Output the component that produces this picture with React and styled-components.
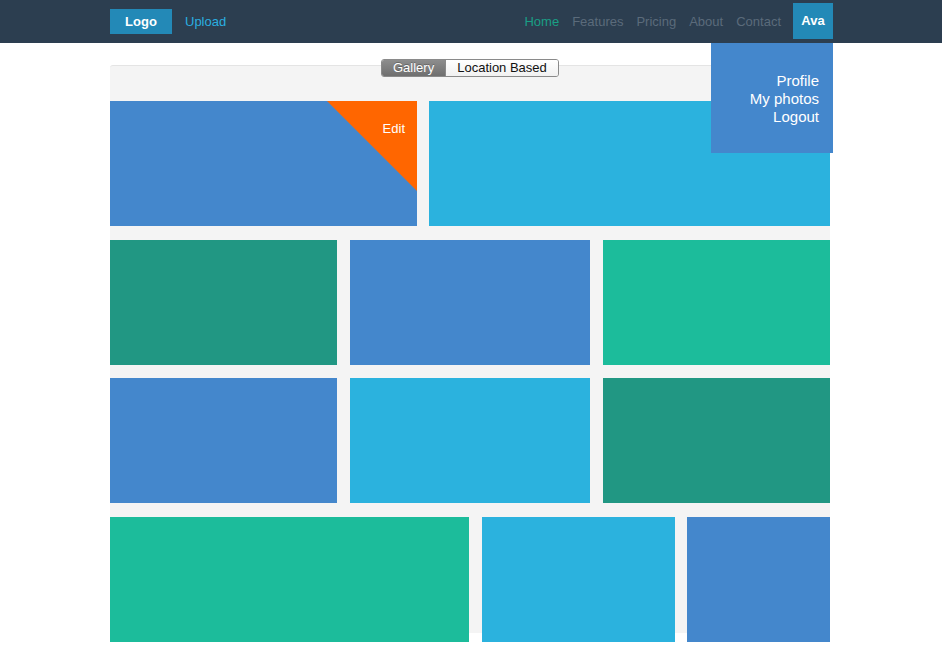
import styled, { createGlobalStyle } from 'styled-components';

const GlobalStyle = createGlobalStyle`
  body {
    margin: 0;
    background: #fff;
    font-family: "Liberation Sans", Arial, sans-serif;
  }
`;

const rows = [
  {
    gap: 12,
    top: 0,
    tiles: [
      { w: 307, c: '#4487cc', edit: true },
      { w: 401, c: '#2bb2de' },
    ],
  },
  {
    gap: 13,
    top: 14,
    tiles: [
      { w: 227, c: '#219783' },
      { w: 240, c: '#4487cc' },
      { w: 227, c: '#1cbc9b' },
    ],
  },
  {
    gap: 13,
    top: 13,
    tiles: [
      { w: 227, c: '#4487cc' },
      { w: 240, c: '#2bb2de' },
      { w: 227, c: '#219783' },
    ],
  },
  {
    gap: 12,
    top: 14,
    tiles: [
      { w: 359, c: '#1cbc9b' },
      { w: 193, c: '#2bb2de' },
      { w: 143, c: '#4487cc' },
    ],
  },
];

const App = () => {
  return (
    <Page>
      <GlobalStyle />
      <Navbar>
        <NavInner>
          <Brand>Logo</Brand>
          <UploadLink>Upload</UploadLink>
          <NavLinks>
            <NavLink $active>Home</NavLink>
            <NavLink>Features</NavLink>
            <NavLink>Pricing</NavLink>
            <NavLink>About</NavLink>
            <NavLink>Contact</NavLink>
          </NavLinks>
          <UserMenu>
            <UserButton>Ava</UserButton>
            <Dropdown>
              <DropItem>Profile</DropItem>
              <DropItem>My photos</DropItem>
              <DropItem>Logout</DropItem>
            </Dropdown>
          </UserMenu>
        </NavInner>
      </Navbar>
      <Panel>
        <Toggle>
          <Segment $on>Gallery</Segment>
          <Segment>Location Based</Segment>
        </Toggle>
        {rows.map((row, i) => (
          <Row key={i} $gap={row.gap} $top={row.top}>
            {row.tiles.map((t, j) => (
              <Tile key={j} $w={t.w} $color={t.c}>
                {t.edit && <Corner>Edit</Corner>}
              </Tile>
            ))}
          </Row>
        ))}
      </Panel>
    </Page>
  );
};

const Page = styled.div`
  min-height: 100vh;
`;

const Navbar = styled.nav`
  background: #2c3e50;
  height: 43px;
`;

const NavInner = styled.div`
  width: 723px;
  margin-left: 110px;
  height: 100%;
  display: flex;
  align-items: center;
  font-size: 13px;
`;

const Brand = styled.div`
  background: #2389b7;
  color: #fff;
  font-weight: bold;
  height: 25px;
  line-height: 25px;
  width: 62px;
  text-align: center;
`;

const UploadLink = styled.a`
  color: #2aaee0;
  margin-left: 13px;
  cursor: pointer;
`;

const NavLinks = styled.div`
  margin-left: auto;
  display: flex;
  gap: 13px;
`;

const NavLink = styled.a`
  color: ${(p) => (p.$active ? '#1a9f85' : '#5b6b7b')};
  cursor: pointer;
`;

const UserMenu = styled.div`
  position: relative;
  margin-left: 12px;
  align-self: flex-start;
  padding-top: 3px;
`;

const UserButton = styled.div`
  background: #2389b7;
  color: #fff;
  font-weight: bold;
  width: 40px;
  height: 36px;
  line-height: 36px;
  text-align: center;
`;

const Dropdown = styled.div`
  position: absolute;
  top: 43px;
  right: 0;
  width: 122px;
  height: 110px;
  box-sizing: border-box;
  padding: 29px 14px 0 0;
  background: #4487cc;
  z-index: 5;
  display: flex;
  flex-direction: column;
  align-items: flex-end;
`;

const DropItem = styled.a`
  color: #fff;
  font-size: 15px;
  line-height: 18px;
  cursor: pointer;
`;

const Panel = styled.section`
  position: relative;
  width: 720px;
  height: 568px;
  margin: 22px 0 0 110px;
  background: #f4f4f4;
  border-top: 1px solid #e4e4e4;
  border-radius: 3px 3px 0 0;
  box-sizing: border-box;
  padding-top: 35px;
`;

const Toggle = styled.div`
  position: absolute;
  top: -7px;
  left: 271px;
  display: flex;
  border: 1px solid #8a8a8a;
  border-radius: 3px;
  overflow: hidden;
  height: 16px;
`;

const Segment = styled.div`
  font-size: 13px;
  line-height: 16px;
  padding: 0 11px;
  color: ${(p) => (p.$on ? '#fff' : '#111')};
  background: ${(p) =>
    p.$on
      ? 'linear-gradient(#8d8d8d, #6f6f6f)'
      : 'linear-gradient(#ffffff, #f1f1f1)'};
  text-shadow: ${(p) => (p.$on ? '0 -1px 0 rgba(0,0,0,0.25)' : 'none')};
  & + & {
    border-left: 1px solid #8a8a8a;
  }
`;

const Row = styled.div`
  display: flex;
  justify-content: space-between;
  gap: ${(p) => p.$gap}px;
  margin-top: ${(p) => p.$top}px;
`;

const Tile = styled.div`
  position: relative;
  flex: none;
  width: ${(p) => p.$w}px;
  height: 125px;
  background: ${(p) => p.$color};
  overflow: hidden;
`;

const Corner = styled.div`
  position: absolute;
  top: 0;
  right: 0;
  width: 90px;
  height: 90px;
  background: #ff6600;
  clip-path: polygon(0 0, 100% 0, 100% 100%);
  box-sizing: border-box;
  padding: 20px 12px 0 0;
  text-align: right;
  color: #fff;
  font-size: 13px;
  line-height: 15px;
`;

export default App;
